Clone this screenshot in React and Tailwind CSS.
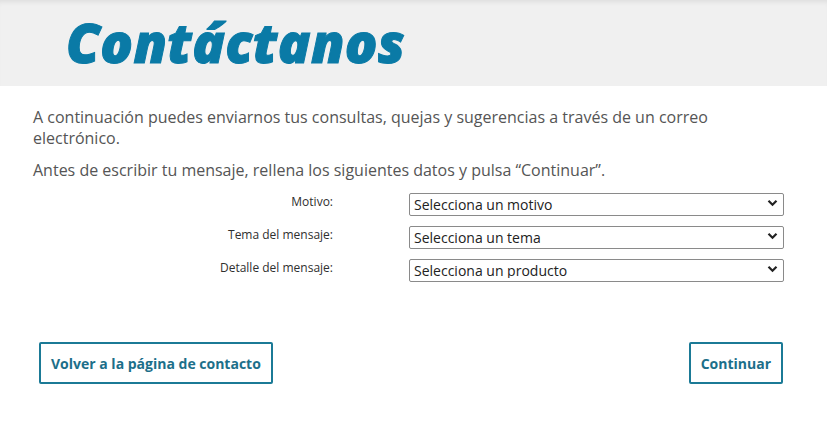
import React from "react";

function Chevron() {
  return (
    <svg width="11" height="8" viewBox="0 0 11 8" className="absolute right-[6px] top-1/2 -translate-y-1/2 pointer-events-none">
      <path d="M1.5 1.8 L5.5 5.8 L9.5 1.8" fill="none" stroke="#222" strokeWidth="2.2" />
    </svg>
  );
}

function Row({ label, placeholder }) {
  return (
    <div className="flex items-center h-[22px]">
      <div className="w-[300px] text-right text-[12px] text-[#2f2f2f] leading-none -mt-[2px]">{label}</div>
      <div className="relative ml-[76px] w-[375px] h-[23px]">
        <select className="appearance-none w-full h-full border border-[#8a8a8a] rounded-[2px] bg-white pl-[4px] text-[14px] text-[#222] leading-none outline-none" style={{ fontFamily: '"Open Sans", sans-serif' }}>
          <option>{placeholder}</option>
        </select>
        <Chevron />
      </div>
    </div>
  );
}

export default function App() {
  return (
    <div className="w-[827px] h-[423px] bg-white overflow-hidden" style={{ fontFamily: '"Open Sans", sans-serif' }}>
      <div className="h-[86px] bg-[#f0f0f0] shadow-[inset_0_5px_5px_-3px_rgba(0,0,0,0.08)] pl-[66px] pt-[2px]">
        <h1 className="text-[54px] font-extrabold italic text-[#0a7aa6] leading-[80px] tracking-[0.3px] [-webkit-text-stroke:1px_#0a7aa6]">Contáctanos</h1>
      </div>
      <div className="px-[33px] pt-[21px]">
        <p className="text-[16px] leading-[21px] text-[#555]">
          A continuación puedes enviarnos tus consultas, quejas y sugerencias a través de un correo electrónico.
        </p>
        <p className="mt-[11px] text-[16px] leading-[21px] text-[#555]">
          Antes de escribir tu mensaje, rellena los siguientes datos y pulsa “Continuar”.
        </p>
        <div className="mt-[11px] flex flex-col gap-[11px]">
          <Row label="Motivo:" placeholder="Selecciona un motivo" />
          <Row label="Tema del mensaje:" placeholder="Selecciona un tema" />
          <Row label="Detalle del mensaje:" placeholder="Selecciona un producto" />
        </div>
        <div className="mt-[62px] flex justify-between pl-[6px] w-[750px]">
          <button className="h-[42px] px-[10px] border-2 border-[#1b7a96] rounded-[2px] text-[14px] font-bold text-[#1c6f8a]">
            Volver a la página de contacto
          </button>
          <button className="h-[42px] px-[10px] border-2 border-[#1b7a96] rounded-[2px] text-[14px] font-bold text-[#1c6f8a]">
            Continuar
          </button>
        </div>
      </div>
    </div>
  );
}
